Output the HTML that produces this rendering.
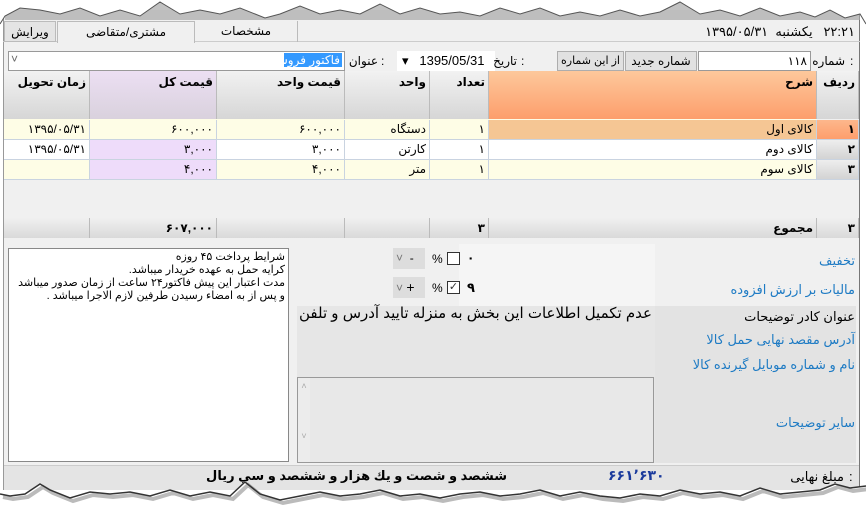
<!DOCTYPE html>
<html><head><meta charset="utf-8"><style>
*{box-sizing:border-box;margin:0;padding:0}
body{width:866px;height:516px;background:#fff;position:relative;overflow:hidden;font-family:"Liberation Sans","DejaVu Sans",sans-serif;font-size:12px;color:#000}
.a{position:absolute}
.r{direction:rtl;text-align:right;white-space:nowrap}
.hd{background:linear-gradient(#f2f2f2,#d6d6d6);border-right:1px solid #bbb;font-weight:bold;padding:4px 3px}
.c{border-right:1px solid #c9d3e0;border-bottom:1px solid #c9d3e0;height:20px;padding:2px 3px;direction:rtl;text-align:right;white-space:nowrap}
.n{background:linear-gradient(#eee,#d3d3d3);font-weight:bold;direction:ltr;text-align:right}
.sum{background:linear-gradient(#f0f0f0,#d9d9d9);height:20px;border-right:1px solid #bbb;font-weight:bold;padding:3px 3px}
.bl{color:#1e7bc4;font-size:13px}
</style></head><body>
<div class="a" style="left:3px;top:10px;width:857px;height:480px;background:#f0f0f0;border-left:1px solid #999;border-right:1px solid #777"></div>
<svg class="a" style="left:0;top:0" width="866" height="26"><polygon fill="#fff" points="0,0 866,0 866,24 860,14 845,18 830,10 815,17 800,12 780,16 760,8 740,16 720,10 700,14 680,2 660,12 640,16 620,10 600,16 580,12 560,16 540,8 520,14 500,8 480,16 460,12 440,14 420,8 400,14 380,4 360,14 340,10 320,14 300,6 280,14 265,18 240,8 220,14 200,10 180,14 160,2 140,16 120,10 100,16 80,8 60,14 40,10 20,8 5,16 0,24"/><polygon fill="#a8a8a8" opacity="0.7" points="5,16 20,8 40,10 60,14 80,8 100,16 120,10 140,16 160,2 180,14 200,10 220,14 240,8 265,18 280,14 300,6 320,14 340,10 360,14 380,4 400,14 420,8 440,14 460,12 480,16 500,8 520,14 540,8 560,16 580,12 600,16 620,10 640,16 660,12 680,2 700,14 720,10 740,16 760,8 780,16 800,12 815,17 830,10 845,18 860,14 860,20 5,20"/><polyline fill="none" stroke="#555" points="0,24 5,16 20,8 40,10 60,14 80,8 100,16 120,10 140,16 160,2 180,14 200,10 220,14 240,8 265,18 280,14 300,6 320,14 340,10 360,14 380,4 400,14 420,8 440,14 460,12 480,16 500,8 520,14 540,8 560,16 580,12 600,16 620,10 640,16 660,12 680,2 700,14 720,10 740,16 760,8 780,16 800,12 815,17 830,10 845,18 860,14 866,24"/></svg>
<div class="a" style="left:3px;top:21px;width:857px;height:21px;border-bottom:1px solid #ccc"></div>
<div class="a r" style="left:4px;top:21px;width:52px;height:21px;background:#e4e4e4;border:1px solid #bbb;padding:3px 4px;text-align:center">ویرایش</div>
<div class="a r" style="left:57px;top:21px;width:138px;height:22px;background:#f0f0f0;border:1px solid #bbb;border-bottom:none;padding:3px;text-align:center">مشتری/متقاضی</div>
<div class="a r" style="left:195px;top:21px;width:103px;height:21px;border-right:1px solid #bbb;padding:3px;text-align:center">مشخصات</div>
<div class="a r" style="left:690px;top:24px;width:165px;font-size:13px">۲۲:۲۱&nbsp;&nbsp; یکشنبه&nbsp; ۱۳۹۵/۰۵/۳۱</div>
<div class="a" style="left:8px;top:51px;width:337px;height:20px;background:#fff;border:1px solid #999"></div>
<div class="a" style="left:11px;top:52px;color:#666">˅</div>
<div class="a r" style="left:284px;top:53px;background:#3399ff;color:#fff;padding:0 2px;width:58px;overflow:hidden">فاکتور فروش</div>
<div class="a r" style="left:330px;top:54px;width:48px">عنوان</div>
<div class="a" style="left:381px;top:54px">:</div>
<div class="a" style="left:397px;top:51px;width:98px;height:20px;background:#fff;padding:2px 5px;font-size:13px">▾&nbsp;&nbsp; 1395/05/31</div>
<div class="a r" style="left:470px;top:54px;width:47px">تاریخ</div>
<div class="a" style="left:521px;top:54px">:</div>
<div class="a r" style="left:557px;top:51px;width:67px;height:20px;background:#e1e1e1;border:1px solid #adadad;padding:2px 1px;text-align:center;font-size:11px">از این شماره</div>
<div class="a r" style="left:625px;top:51px;width:72px;height:20px;background:#e1e1e1;border:1px solid #adadad;padding:2px;text-align:center">شماره جدید</div>
<div class="a r" style="left:698px;top:51px;width:113px;height:20px;background:#fff;border:1px solid #999;padding:2px 3px">۱۱۸</div>
<div class="a r" style="left:800px;top:54px;width:45px">شماره</div>
<div class="a" style="left:850px;top:54px">:</div>
<div class="a hd r" style="left:4px;top:71px;width:86px;height:48px">زمان تحویل</div>
<div class="a hd r" style="left:90px;top:71px;width:127px;height:48px;background:linear-gradient(#ecdff3,#d9d1dd)">قیمت کل</div>
<div class="a hd r" style="left:217px;top:71px;width:128px;height:48px">قیمت واحد</div>
<div class="a hd r" style="left:345px;top:71px;width:85px;height:48px">واحد</div>
<div class="a hd r" style="left:430px;top:71px;width:59px;height:48px">تعداد</div>
<div class="a hd r" style="left:489px;top:71px;width:328px;height:48px;background:linear-gradient(#fdc89c,#fd9e6c)">شرح</div>
<div class="a hd r" style="left:817px;top:71px;width:42px;height:48px">ردیف</div>
<div class="a" style="left:4px;top:119px;width:813px;height:60px;background:#fefde6"></div>
<div class="a c" style="left:4px;top:120px;width:86px">۱۳۹۵/۰۵/۳۱</div>
<div class="a c" style="left:90px;top:120px;width:127px">۶۰۰,۰۰۰</div>
<div class="a c" style="left:217px;top:120px;width:128px">۶۰۰,۰۰۰</div>
<div class="a c" style="left:345px;top:120px;width:85px">دستگاه</div>
<div class="a c" style="left:430px;top:120px;width:59px">۱</div>
<div class="a c" style="left:489px;top:120px;width:328px;background:#f5c694">کالای اول</div>
<div class="a c n" style="left:817px;top:120px;width:42px;background:linear-gradient(#fdb78c,#fd9e6c)">۱</div>
<div class="a c" style="left:4px;top:140px;width:86px;background:#fff">۱۳۹۵/۰۵/۳۱</div>
<div class="a c" style="left:90px;top:140px;width:127px;background:#eedcfa">۳,۰۰۰</div>
<div class="a c" style="left:217px;top:140px;width:128px;background:#fff">۳,۰۰۰</div>
<div class="a c" style="left:345px;top:140px;width:85px;background:#fff">کارتن</div>
<div class="a c" style="left:430px;top:140px;width:59px;background:#fff">۱</div>
<div class="a c" style="left:489px;top:140px;width:328px;background:#fff">کالای دوم</div>
<div class="a c n" style="left:817px;top:140px;width:42px">۲</div>
<div class="a c" style="left:4px;top:160px;width:86px"></div>
<div class="a c" style="left:90px;top:160px;width:127px;background:#eedcfa">۴,۰۰۰</div>
<div class="a c" style="left:217px;top:160px;width:128px">۴,۰۰۰</div>
<div class="a c" style="left:345px;top:160px;width:85px">متر</div>
<div class="a c" style="left:430px;top:160px;width:59px">۱</div>
<div class="a c" style="left:489px;top:160px;width:328px">کالای سوم</div>
<div class="a c n" style="left:817px;top:160px;width:42px">۳</div>
<div class="a sum r" style="left:4px;top:218px;width:86px"></div>
<div class="a sum r" style="left:90px;top:218px;width:127px;direction:ltr;text-align:right">۶۰۷,۰۰۰</div>
<div class="a sum r" style="left:217px;top:218px;width:128px"></div>
<div class="a sum r" style="left:345px;top:218px;width:85px"></div>
<div class="a sum r" style="left:430px;top:218px;width:59px">۳</div>
<div class="a sum r" style="left:489px;top:218px;width:328px">مجموع</div>
<div class="a sum" style="left:817px;top:218px;width:42px;text-align:right">۳</div>
<div class="a" style="left:8px;top:248px;width:281px;height:214px;background:#fff;border:1px solid #888"></div>
<div class="a r" style="left:12px;top:251px;width:273px;line-height:13px;font-size:11px">شرایط پرداخت ۴۵ روزه<br>کرایه حمل به عهده خریدار میباشد.<br>مدت اعتبار این پیش فاکتور۲۴ ساعت از زمان صدور میباشد<br>و پس از به امضاء رسیدن طرفین لازم الاجرا میباشد .</div>
<div class="a" style="left:297px;top:244px;width:559px;height:62px;background:#f0f0f0"></div>
<div class="a" style="left:459px;top:244px;width:196px;height:62px;background:#f5f5f5"></div>
<div class="a" style="left:393px;top:248px;width:32px;height:21px;background:#ddd;color:#777;padding:3px 3px">˅ &nbsp;<span style="color:#000">-</span></div>
<div class="a" style="left:393px;top:277px;width:32px;height:21px;background:#ddd;color:#777;padding:2px 3px">˅ <span style="color:#000;font-size:14px">+</span></div>
<div class="a" style="left:432px;top:252px">%</div>
<div class="a" style="left:432px;top:281px">%</div>
<div class="a" style="left:447px;top:252px;width:13px;height:13px;border:1px solid #333;background:#fff"></div>
<div class="a" style="left:447px;top:281px;width:13px;height:13px;border:1px solid #333;background:#fff;font-size:11px;line-height:11px;text-align:center;color:#333">✓</div>
<div class="a" style="left:467px;top:251px;font-weight:bold">۰</div>
<div class="a" style="left:467px;top:280px;font-weight:bold;font-size:13px">۹</div>
<div class="a" style="left:297px;top:306px;width:358px;height:157px;background:#e6e6e6"></div>
<div class="a r" style="left:297px;top:304px;width:355px;overflow:hidden;font-size:15px">عدم تکمیل اطلاعات این بخش به منزله تایید آدرس و تلفن</div>
<div class="a" style="left:297px;top:377px;width:357px;height:86px;background:#e8e8e8;border:1px solid #999"></div>
<div class="a" style="left:298px;top:378px;width:12px;height:84px;background:#ececec;color:#aaa;font-size:9px;text-align:center;padding-top:3px">˄<br><br><br><br><br>˅</div>
<div class="a" style="left:655px;top:244px;width:201px;height:62px;background:#f0f0f0"></div>
<div class="a" style="left:655px;top:306px;width:201px;height:157px;background:#e3e3e3"></div>
<div class="a r bl" style="left:660px;top:253px;width:195px">تخفیف</div>
<div class="a r bl" style="left:660px;top:282px;width:195px">مالیات بر ارزش افزوده</div>
<div class="a r" style="left:660px;top:309px;width:195px;font-size:13px">عنوان کادر توضیحات</div>
<div class="a r bl" style="left:660px;top:332px;width:195px">آدرس مقصد نهایی حمل کالا</div>
<div class="a r bl" style="left:660px;top:357px;width:195px">نام و شماره موبایل گیرنده کالا</div>
<div class="a r bl" style="left:660px;top:415px;width:195px">سایر توضیحات</div>
<div class="a" style="left:4px;top:465px;width:855px;height:25px;background:#e4e4e4;border-top:1px solid #ccc"></div>
<div class="a r" style="left:780px;top:469px;width:64px;font-size:13px">مبلغ نهایی</div>
<div class="a" style="left:849px;top:469px;font-size:13px">:</div>
<div class="a" style="left:608px;top:467px;color:#1a3a9c;font-weight:bold;font-size:14px;letter-spacing:1px">۶۶۱٬۶۳۰</div>
<div class="a r" style="left:200px;top:468px;width:307px;font-weight:bold;font-size:13px">ششصد و شصت و یك هزار و ششصد و سي ريال</div>
<svg class="a" style="left:0;top:482px" width="866" height="34"><polygon fill="#fff" points="0,34 866,34 866,4 850,6 835,2 820,8 800,10 780,12 760,6 740,14 720,10 700,12 680,8 660,14 640,12 620,16 600,14 580,10 560,14 540,8 520,12 500,14 480,10 460,12 440,16 420,12 400,14 380,8 360,12 340,14 320,10 300,14 280,18 260,12 245,0 230,14 210,10 190,14 170,8 150,14 130,10 110,12 90,10 70,16 50,8 40,2 25,12 10,14 0,12"/><polyline fill="none" stroke="#777" stroke-width="4" opacity="0.5" transform="translate(3,3)" points="0,12 10,14 25,12 40,2 50,8 70,16 90,10 110,12 130,10 150,14 170,8 190,14 210,10 230,14 245,0 260,12 280,18 300,14 320,10 340,14 360,12 380,8 400,14 420,12 440,16 460,12 480,10 500,14 520,12 540,8 560,14 580,10 600,14 620,16 640,12 660,14 680,8 700,12 720,10 740,14 760,6 780,12 800,10 820,8 835,2 850,6 866,4"/><polyline fill="none" stroke="#333" stroke-width="1.5" points="0,12 10,14 25,12 40,2 50,8 70,16 90,10 110,12 130,10 150,14 170,8 190,14 210,10 230,14 245,0 260,12 280,18 300,14 320,10 340,14 360,12 380,8 400,14 420,12 440,16 460,12 480,10 500,14 520,12 540,8 560,14 580,10 600,14 620,16 640,12 660,14 680,8 700,12 720,10 740,14 760,6 780,12 800,10 820,8 835,2 850,6 866,4"/></svg>
</body></html>
